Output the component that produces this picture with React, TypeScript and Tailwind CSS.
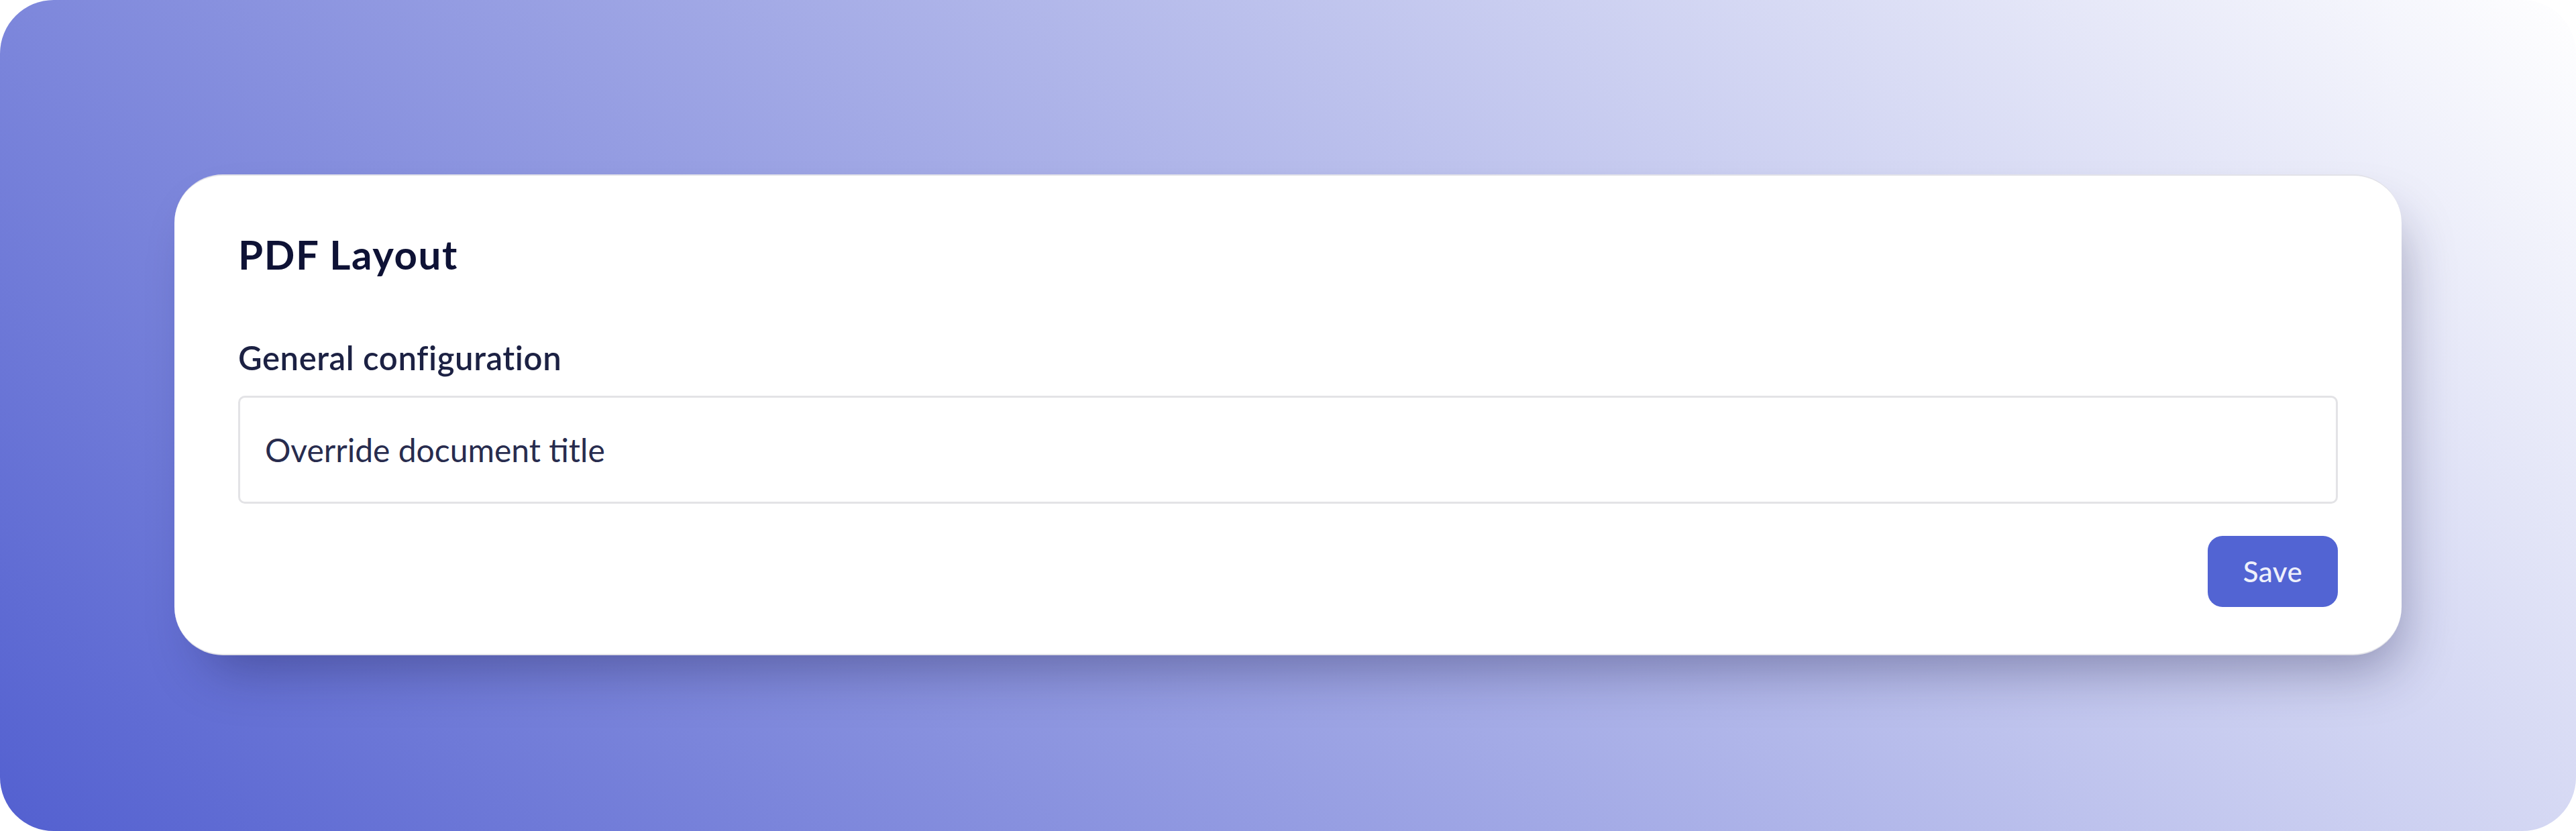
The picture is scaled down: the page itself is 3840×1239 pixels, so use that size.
import React from "react";

export default function App() {
  return (
    <div className="w-[3840px] h-[1239px] bg-white font-['Lato','Noto_Sans',sans-serif]">
      <div className="w-full h-full rounded-[80px] bg-[linear-gradient(45deg,#5360d0,#ffffff)] pt-[260px] px-[260px]">
        <div className="h-[717px] bg-white rounded-[72px] border-y-2 border-[#e2e2e8] shadow-[20px_44px_80px_-24px_rgba(20,22,70,0.38)] pt-[81px] px-[95px]">
          <h1 className="text-[60px] leading-[72px] font-bold tracking-[1.6px] text-[#0e1235]">PDF Layout</h1>
          <div className="mt-[89px] text-[49px] leading-[58px] font-semibold tracking-[0.6px] text-[#1c2143]">
            General configuration
          </div>
          <div className="mt-[28px] h-[161px] border-[3px] border-[#e3e3e6] rounded-[10px] flex items-center pl-[37px]">
            <span className="text-[48px] leading-[58px] text-[#282c4e]">Override document title</span>
          </div>
          <div className="mt-[48px] flex justify-end">
            <button className="w-[194px] h-[106px] rounded-[22px] bg-[#5264d3] text-[42px] leading-[50px] font-medium tracking-[0.5px] text-[#eef0fb] flex items-center justify-center">
              Save
            </button>
          </div>
        </div>
      </div>
    </div>
  );
}
